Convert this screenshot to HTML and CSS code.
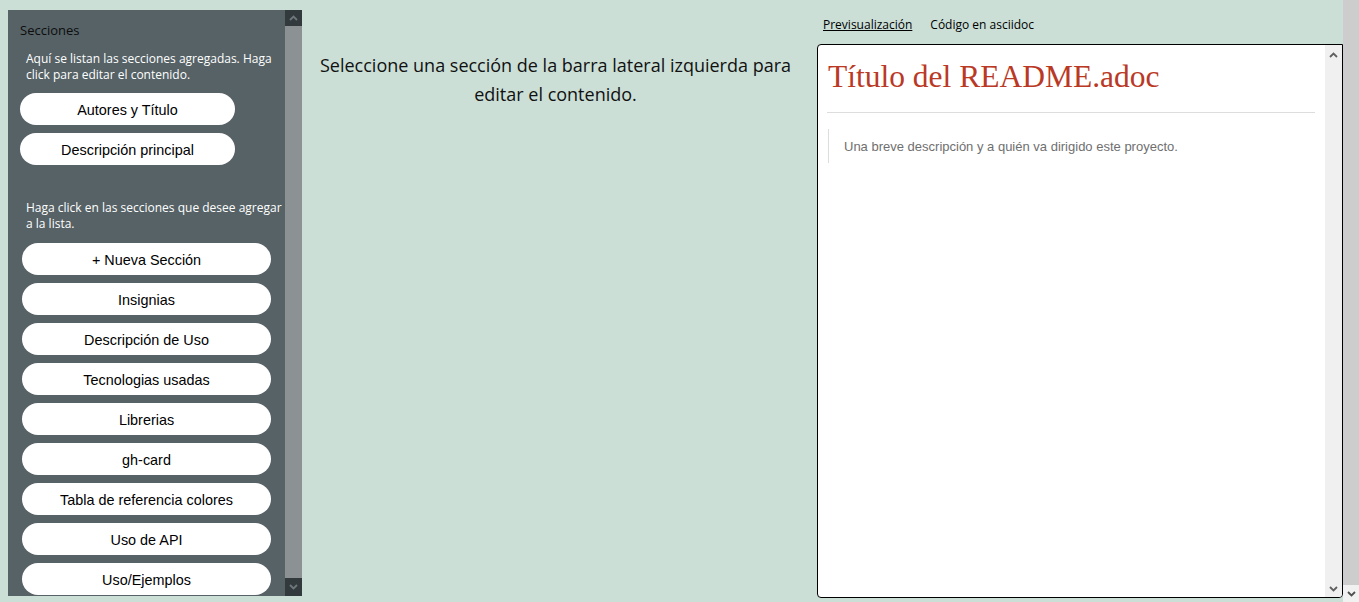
FILE: index.html
```html
<!DOCTYPE html>
<html lang="es">
<head>
<meta charset="utf-8">
<title>README editor</title>
<link rel="stylesheet" href="styles.css">
</head>
<body>
<div class="page">
  <aside class="sidebar">
    <div class="side-content">
      <h2 class="side-title">Secciones</h2>
      <p class="side-note"><span>Aquí se listan las secciones agregadas. Haga</span><br><span>click para editar el contenido.</span></p>
      <div class="added">
        <button class="pill pill-added">Autores y Título</button>
        <button class="pill pill-added">Descripción principal</button>
      </div>
      <p class="side-note side-note-2"><span>Haga click en las secciones que desee agregar</span><br><span>a la lista.</span></p>
      <div class="available">
        <button class="pill">+ Nueva Sección</button>
        <button class="pill">Insignias</button>
        <button class="pill">Descripción de Uso</button>
        <button class="pill">Tecnologias usadas</button>
        <button class="pill">Librerias</button>
        <button class="pill">gh-card</button>
        <button class="pill">Tabla de referencia colores</button>
        <button class="pill">Uso de API</button>
        <button class="pill">Uso/Ejemplos</button>
      </div>
    </div>
    <div class="vscroll vscroll-dark">
      <div class="sb-btn sb-up"><svg width="9" height="6" viewBox="0 0 9 6"><polyline points="1,5 4.5,1.5 8,5" fill="none" stroke="currentColor" stroke-width="1.8"/></svg></div>
      <div class="sb-track"></div>
      <div class="sb-btn sb-down"><svg width="9" height="6" viewBox="0 0 9 6"><polyline points="1,1 4.5,4.5 8,1" fill="none" stroke="currentColor" stroke-width="1.8"/></svg></div>
    </div>
  </aside>

  <main class="center">
    <p class="hint">Seleccione una sección de la barra lateral izquierda para editar el contenido.</p>
  </main>

  <section class="preview">
    <nav class="tabs">
      <a class="tab tab-active">Previsualización</a>
      <a class="tab">Código en asciidoc</a>
    </nav>
    <div class="frame">
      <div class="doc">
        <h1 class="doc-title">Título del README.adoc</h1>
        <hr class="doc-rule">
        <blockquote class="doc-quote">Una breve descripción y a quién va dirigido este proyecto.</blockquote>
      </div>
      <div class="vscroll vscroll-light">
        <div class="sb-btn sb-up"><svg width="9" height="6" viewBox="0 0 9 6"><polyline points="1,5 4.5,1.5 8,5" fill="none" stroke="currentColor" stroke-width="1.8"/></svg></div>
        <div class="sb-track"></div>
        <div class="sb-btn sb-down"><svg width="9" height="6" viewBox="0 0 9 6"><polyline points="1,1 4.5,4.5 8,1" fill="none" stroke="currentColor" stroke-width="1.8"/></svg></div>
      </div>
    </div>
  </section>

  <div class="page-scroll">
    <div class="ps-thumb"></div>
    <div class="ps-btn"><svg width="9" height="6" viewBox="0 0 9 6"><polyline points="1,1 4.5,4.5 8,1" fill="none" stroke="currentColor" stroke-width="1.8"/></svg></div>
  </div>
</div>
</body>
</html>
```

FILE: styles.css
```css
* { box-sizing: border-box; }

html, body {
  margin: 0;
  padding: 0;
  height: 602px;
  overflow: hidden;
  background: #cbdfd7;
  font-family: "Open Sans", sans-serif;
}

.page {
  display: flex;
  height: 602px;
}

/* Sidebar */
.sidebar {
  width: 294px;
  height: 586px;
  margin: 10px 0 0 8px;
  display: flex;
  background: #566266;
  flex-shrink: 0;
}

.side-content {
  flex: 1;
  overflow: hidden;
  padding: 11px 0 0 0;
}

.side-title {
  margin: 0 0 0 12px;
  font-size: 13px;
  line-height: 18px;
  font-weight: normal;
  color: #0d0d0d;
}

.side-note {
  margin: 12px 0 0 18px;
  font-size: 12px;
  line-height: 16px;
  color: #ffffff;
}

.side-note span { white-space: nowrap; }

.side-note-2 {
  margin-top: 35px;
}

.added {
  display: flex;
  flex-direction: column;
  gap: 8px;
  margin: 10px 0 0 12px;
}

.available {
  display: flex;
  flex-direction: column;
  gap: 8px;
  margin: 11px 0 0 14px;
}

.pill {
  display: block;
  height: 32px;
  border: none;
  border-radius: 16px;
  background: #ffffff;
  color: #000;
  font-family: "Liberation Sans", Arial, sans-serif;
  font-size: 14.4px;
  padding: 2px 0 0 0;
  text-align: center;
  width: 249px;
}

.pill-added { width: 215px; }

/* Scrollbars */
.vscroll {
  width: 17px;
  display: flex;
  flex-direction: column;
  flex-shrink: 0;
}

.sb-btn {
  height: 17px;
  display: flex;
  align-items: center;
  justify-content: center;
}

.sb-track { flex: 1; }

.vscroll-dark .sb-btn {
  background: #323a3d;
  color: #6e777b;
}
.vscroll-dark .sb-up { height: 16px; }
.vscroll-dark .sb-down { height: 18px; }
.vscroll-dark .sb-track { background: #8c9194; }

.vscroll-light { background: #f0f0f0; }
.vscroll-light .sb-btn { color: #606060; }
.vscroll-light .sb-up { padding-top: 2px; }

/* Center */
.center {
  flex: 1;
  padding: 51px 12px 0 4px;
}

.hint {
  margin: 0;
  text-align: center;
  font-size: 18px;
  line-height: 29px;
  color: #111;
}

/* Preview */
.preview {
  width: 526px;
  flex-shrink: 0;
  display: flex;
  flex-direction: column;
  padding-top: 16px;
}

.tabs {
  display: flex;
  gap: 18px;
  padding-left: 6px;
  height: 28px;
}

.tab {
  font-size: 12px;
  line-height: 17px;
  color: #000;
}

.tab-active { text-decoration: underline; }

.frame {
  height: 554px;
  border: 1px solid #000;
  border-radius: 4px 0 4px 4px;
  background: #fff;
  display: flex;
  overflow: hidden;
}

.doc {
  flex: 1;
  padding: 11px 10px 0 9px;
}

.doc-title {
  margin: 0 0 0 1px;
  font-family: "Liberation Serif", Georgia, serif;
  font-weight: normal;
  font-size: 31.5px;
  line-height: 42px;
  color: #ba3925;
}

.doc-rule {
  border: none;
  border-top: 1px solid #dddddd;
  margin: 14px 0 0 0;
  height: 0;
}

.doc-quote {
  margin: 16px 0 0 1px;
  border-left: 1px solid #dddddd;
  padding: 9px 0 7px 15px;
  font-family: "Liberation Sans", Arial, sans-serif;
  font-size: 13px;
  line-height: 18px;
  color: #6f6f6f;
}

/* Page scrollbar */
.page-scroll {
  width: 16px;
  flex-shrink: 0;
  display: flex;
  flex-direction: column;
  background: #f1f1f1;
}

.ps-thumb {
  flex: 1;
  background: #cdcdcd;
}

.ps-btn {
  height: 17px;
  display: flex;
  align-items: center;
  justify-content: center;
  color: #505050;
}
```
